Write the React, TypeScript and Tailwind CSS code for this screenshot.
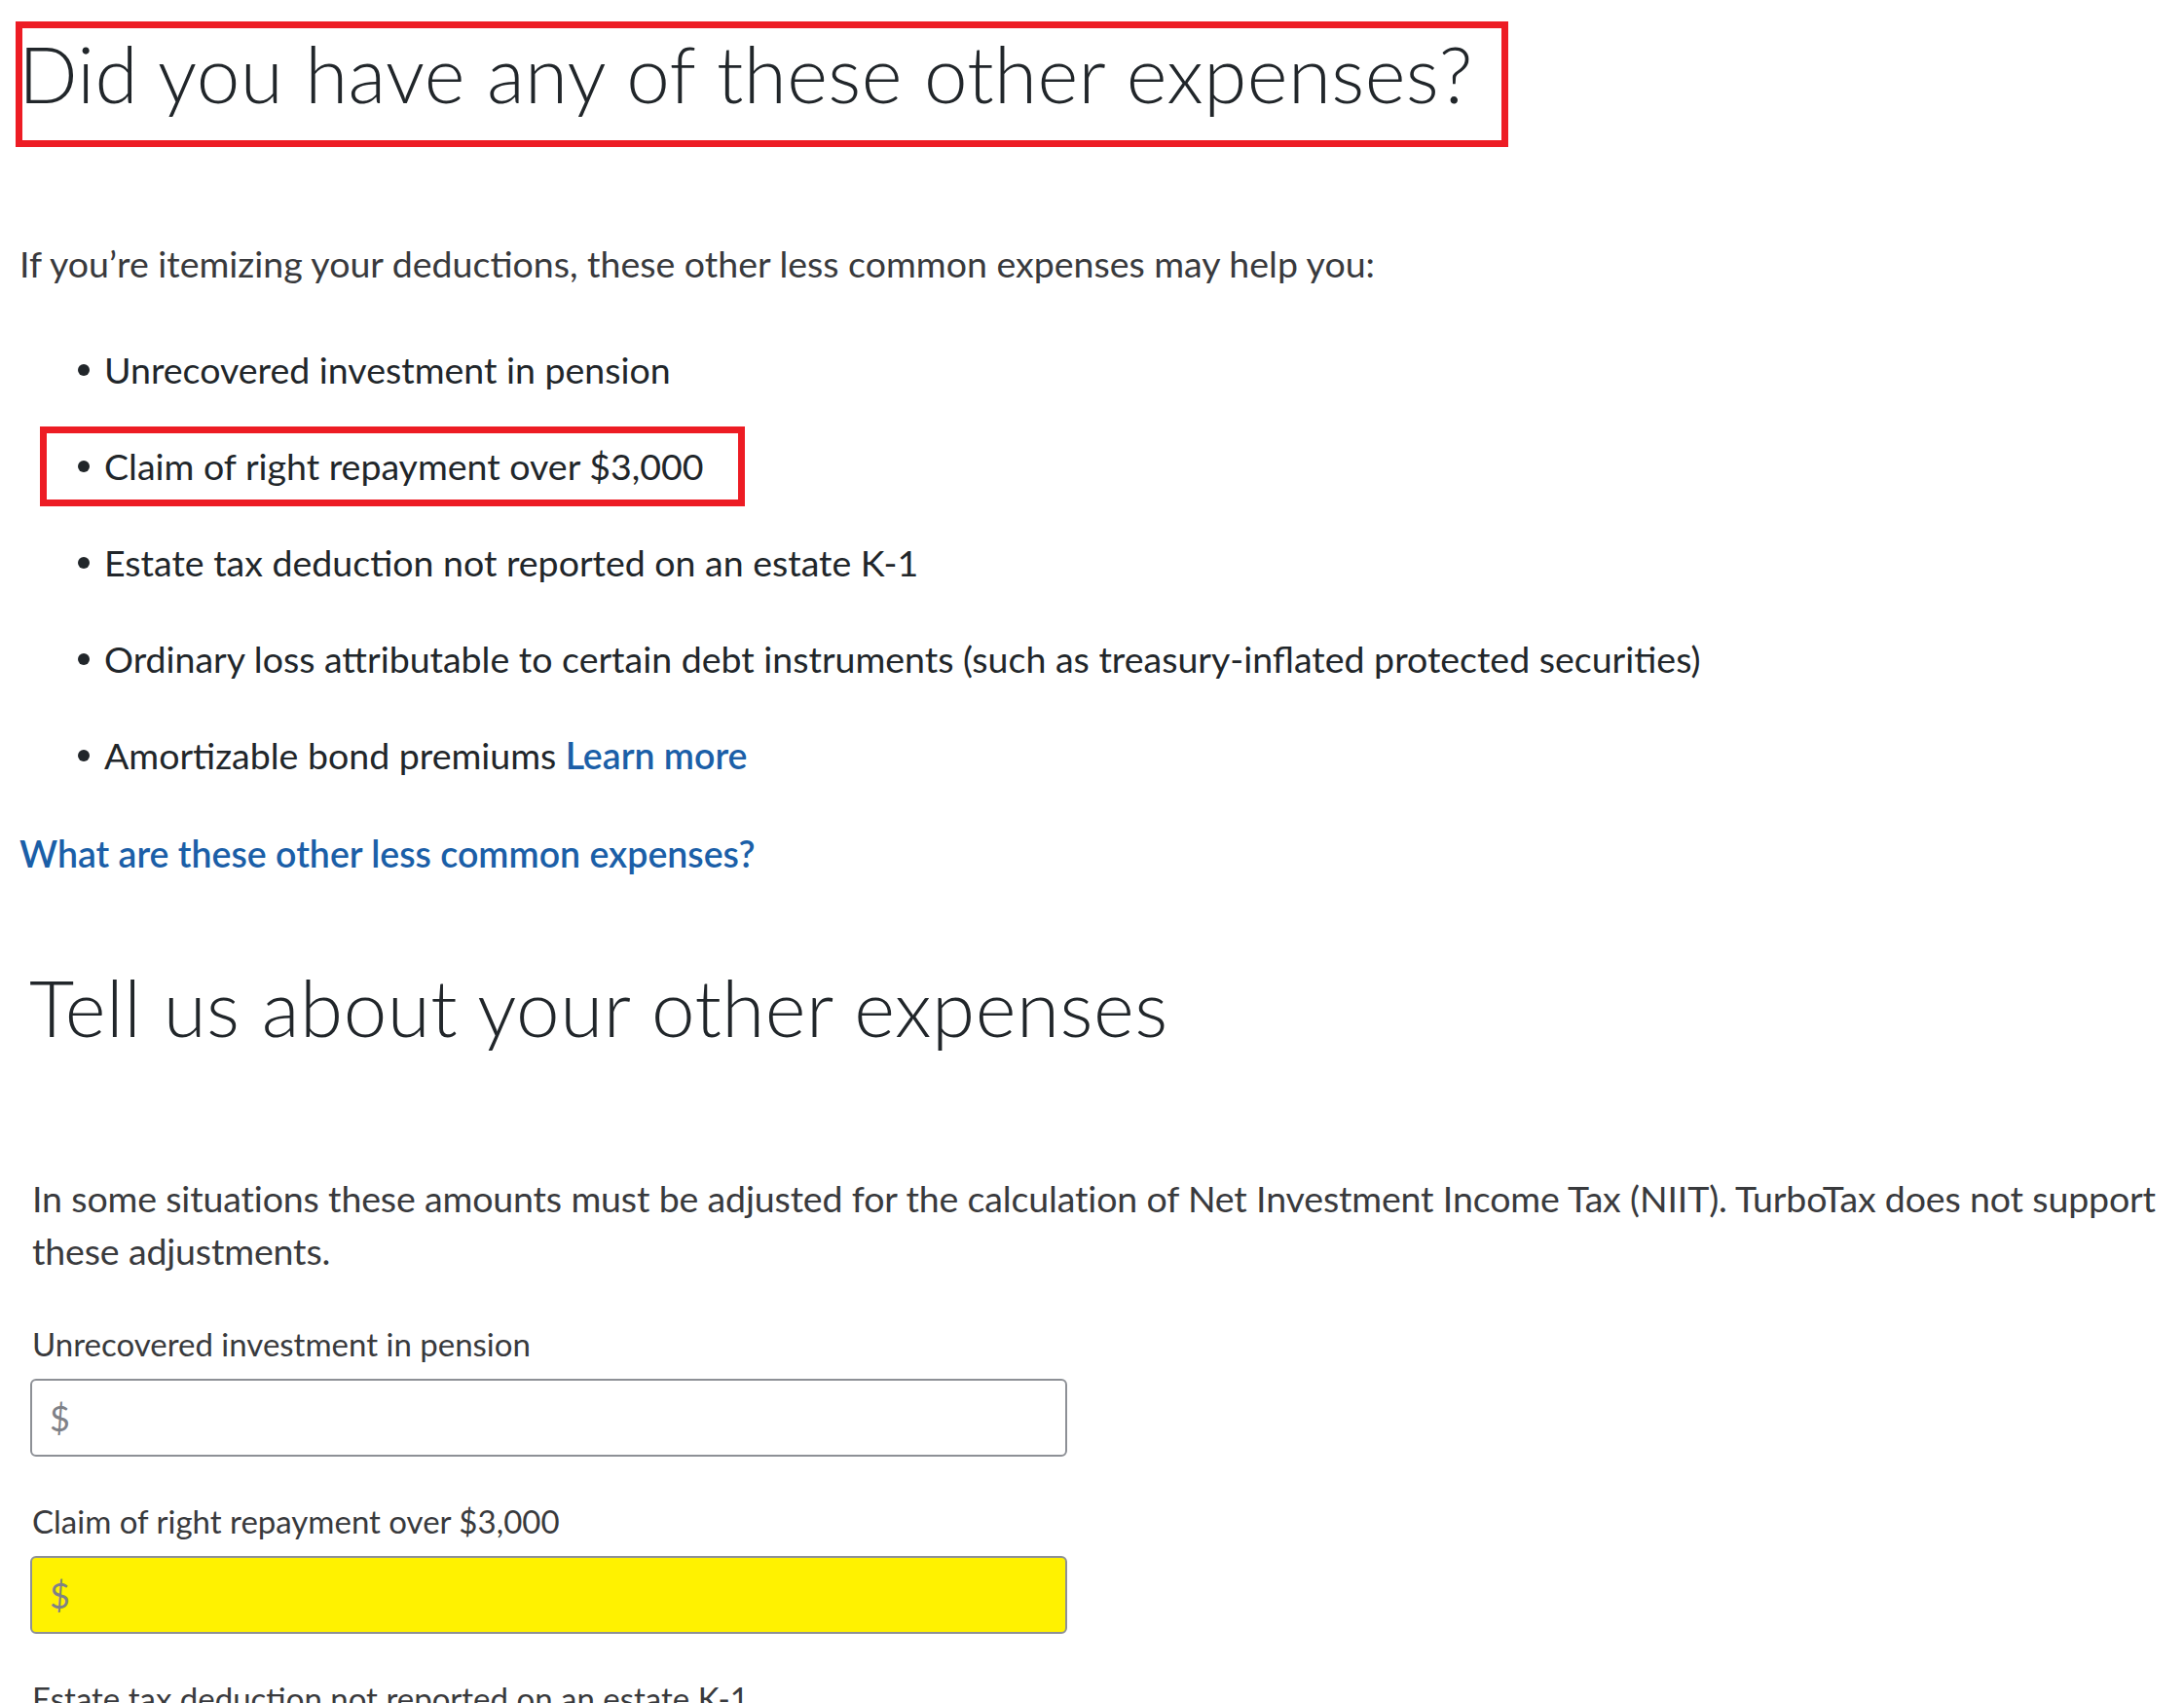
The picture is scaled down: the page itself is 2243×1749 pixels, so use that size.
import React from 'react';

const bullets = [
  'Unrecovered investment in pension',
  'Claim of right repayment over $3,000',
  'Estate tax deduction not reported on an estate K-1',
  'Ordinary loss attributable to certain debt instruments (such as treasury-inflated protected securities)',
  'Amortizable bond premiums',
];

const fields = [
  { label: 'Unrecovered investment in pension', highlight: false },
  { label: 'Claim of right repayment over $3,000', highlight: true },
  { label: 'Estate tax deduction not reported on an estate K-1', highlight: false },
];

export default function App(): JSX.Element {
  return (
    <div className="min-h-screen w-full bg-white font-['Lato','Liberation_Sans',sans-serif] text-[#21262a]">
      {/* top heading, boxed in red */}
      <div className="pl-[16px] pt-[22px]">
        <div className="flex h-[129px] w-[1533px] items-center border-[7px] border-[#ed1c24] pb-[24px]">
          <h1 className="-ml-[4px] text-[80px] font-light leading-none tracking-[0.4px]">Did you have any of these other expenses?</h1>
        </div>
      </div>

      <p className="mt-[101px] pl-[20px] text-[37.5px] leading-none text-[#393a3d]">
        If you’re itemizing your deductions, these other less common expenses may help you:
      </p>

      <ul className="mt-[41px] pl-[41px]">
        {bullets.map((b, i) => (
          <li key={b} className="flex h-[99px] items-center">
            <div
              className={
                'flex h-[82px] items-center border-[7px] pl-[32px] ' +
                (i === 1 ? 'w-[724px] border-[#ed1c24]' : 'border-transparent')
              }
            >
              <span className="mr-[15px] h-[12px] w-[12px] rounded-full bg-[#21262a]" />
              <span className="text-[37.5px] leading-none">
                {b}
                {i === 4 && <span className="font-semibold text-[#1b5fa8]"> Learn more</span>}
              </span>
            </div>
          </li>
        ))}
      </ul>

      <div className="mt-[32px] pl-[20px]">
        <a className="text-[37.5px] font-semibold leading-none text-[#1b5fa8]">What are these other less common expenses?</a>
      </div>

      <h2 className="mt-[97px] pl-[30px] text-[80px] font-light leading-none tracking-[0.5px]">Tell us about your other expenses</h2>

      <p className="mt-[130px] pl-[33px] text-[37.5px] leading-[54px] tracking-[-0.15px] text-[#393a3d]">
        In some situations these amounts must be adjusted for the calculation of Net Investment Income Tax (NIIT). TurboTax does not support these adjustments.
      </p>

      <div className="mt-[52px] flex flex-col pl-[31px]">
        {fields.map((f) => (
          <div key={f.label} className="mb-[50px] flex flex-col">
            <label className="pl-[2px] text-[33px] leading-none text-[#393a3d]">{f.label}</label>
            <div
              className={
                'mt-[19px] flex h-[80px] w-[1065px] items-center rounded-[6px] border-2 border-[#8d9096] pl-[18px] ' +
                (f.highlight ? 'bg-[#fff200]' : 'bg-white')
              }
            >
              <span className="text-[36px] text-[#7f8187]">$</span>
            </div>
          </div>
        ))}
      </div>
    </div>
  );
}
